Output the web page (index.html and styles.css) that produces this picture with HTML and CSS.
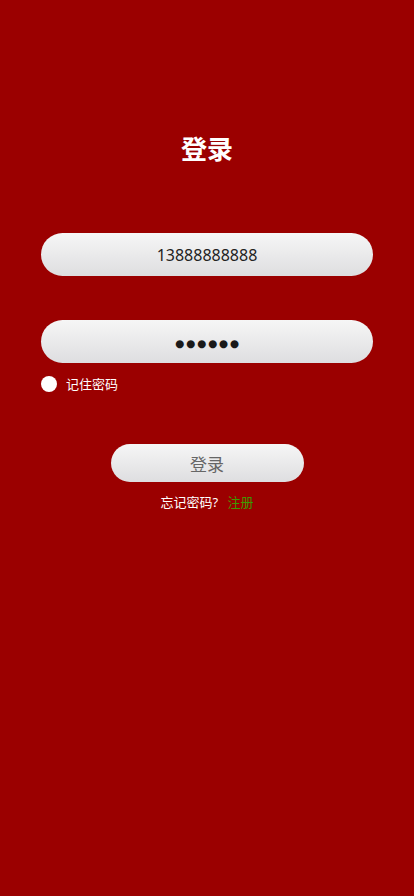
FILE: index.html
```html
<!DOCTYPE html>
<html lang="zh">
<head>
<meta charset="utf-8">
<meta name="viewport" content="width=device-width, initial-scale=1">
<title>登录</title>
<link rel="stylesheet" href="styles.css">
</head>
<body>
<main class="page">
  <h1 class="title">登录</h1>
  <div class="field field-phone">13888888888</div>
  <div class="field field-pass"><span class="dots">●●●●●●</span></div>
  <label class="remember">
    <span class="check"></span>
    <span class="remember-text">记住密码</span>
  </label>
  <div class="btn-row">
    <button class="btn" type="button">登录</button>
  </div>
  <div class="links">
    <span class="forgot">忘记密码?</span>
    <span class="register">注册</span>
  </div>
</main>
</body>
</html>
```
FILE: styles.css
```css
html, body {
  margin: 0;
  padding: 0;
  height: 100%;
  background: #9b0000;
}
body {
  font-family: "Noto Sans", "Noto Sans CJK SC", sans-serif;
  color: #fff;
}
.page {
  display: flex;
  flex-direction: column;
  padding: 134px 41px 0 41px;
}
.title {
  margin: 0;
  font-size: 26px;
  line-height: 30px;
  font-weight: 700;
  text-align: center;
  color: #fff;
}
.field {
  margin-top: 69px;
  height: 43px;
  border-radius: 22px;
  background: linear-gradient(#f6f6f6, #dedee0);
  color: #222;
  display: flex;
  align-items: center;
  justify-content: center;
  font-size: 16px;
}
.field-pass {
  margin-top: 44px;
  color: #1a1a1a;
}
.dots {
  font-family: "DejaVu Sans", sans-serif;
  font-size: 10.5px;
  letter-spacing: 1.8px;
  margin-right: -1.8px;
  padding-top: 2px;
}
.remember {
  margin-top: 13px;
  display: flex;
  align-items: center;
  height: 16px;
}
.check {
  width: 16px;
  height: 16px;
  border-radius: 50%;
  background: #fff;
}
.remember-text {
  margin-left: 9px;
  font-size: 13px;
  line-height: 16px;
}
.btn-row {
  margin-top: 52px;
  display: flex;
  justify-content: center;
}
.btn {
  width: 193px;
  height: 38px;
  border: none;
  border-radius: 19px;
  background: linear-gradient(#f6f6f6, #dedee0);
  color: #666;
  font-family: "Noto Sans CJK SC", sans-serif;
  font-size: 17px;
  padding: 0;
}
.links {
  margin-top: 11px;
  text-align: center;
  font-size: 13px;
  line-height: 18px;
}
.forgot {
  color: #fff;
}
.register {
  color: #3c9b00;
  margin-left: 6px;
}
```
